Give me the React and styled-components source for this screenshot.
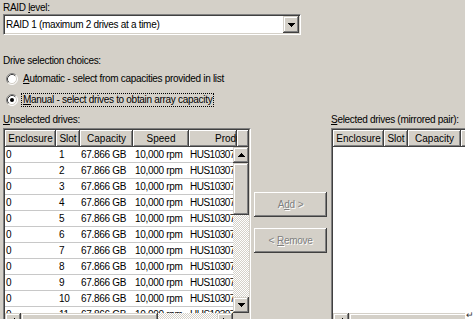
import styled, { createGlobalStyle, css } from 'styled-components';

const FACE = '#d4d0c8';
const SHADOW = '#808080';
const DARK = '#404040';

const COLS = [51, 24, 53, 56];

const drives = Array.from({ length: 12 }, (_, i) => ({
  enclosure: '0',
  slot: String(i + 1),
  capacity: '67.866 GB',
  speed: '10,000 rpm',
  product: 'HUS103073FL3800',
}));

const GlobalStyle = createGlobalStyle`
  body {
    margin: 0;
    background: #fff;
  }
`;

const raised = css`
  background: ${FACE};
  box-shadow: inset -1px -1px ${DARK}, inset 1px 1px ${FACE}, inset -2px -2px ${SHADOW}, inset 2px 2px #fff;
`;

const Page = styled.div`
  display: flex;
  align-items: flex-end;
  width: 474px;
  height: 319px;
  overflow: hidden;
  font-family: 'Liberation Sans', Arial, sans-serif;
  font-size: 10px;
  letter-spacing: -0.3px;
  color: #000;
`;

const Dialog = styled.div`
  width: 465px;
  height: 319px;
  flex-shrink: 0;
  overflow: hidden;
  box-sizing: border-box;
  padding: 1px 0 0 3px;
  background: ${FACE};
`;

const Label = styled.div`
  height: 13px;
  line-height: 13px;
  white-space: nowrap;
  margin-top: ${p => p.$top || 0}px;
`;

const Key = styled.span`
  text-decoration: underline;
`;

const Combo = styled.div`
  width: 298px;
  height: 21px;
  box-sizing: border-box;
  display: flex;
  align-items: center;
  justify-content: space-between;
  padding: 0 1px 0 2px;
  background: #fff;
  border-top: 1px solid ${SHADOW};
  border-left: 1px solid ${SHADOW};
  border-right: 1px solid #fff;
  border-bottom: 1px solid #fff;
  box-shadow: inset 1px 1px ${DARK}, inset -1px -1px ${FACE};
`;

const DropButton = styled.div`
  width: 16px;
  height: 17px;
  display: flex;
  align-items: center;
  justify-content: center;
  ${raised}
`;

const Radios = styled.div`
  display: flex;
  flex-direction: column;
  margin-top: 1px;
`;

const RadioRow = styled.div`
  height: 21px;
  display: flex;
  align-items: center;
  gap: 5px;
  padding-left: 3px;
  white-space: nowrap;
`;

const RadioText = styled.span`
  line-height: 12px;
  padding: 0 1px;
  border: 1px dotted ${p => (p.$focus ? '#000' : 'transparent')};
  margin-left: -2px;
`;

const Panes = styled.div`
  display: flex;
  margin-top: 3px;
`;

const Pane = styled.div`
  width: ${p => p.$w}px;
  flex-shrink: 0;
  display: flex;
  flex-direction: column;
  gap: 2px;
`;

const Middle = styled.div`
  width: 73px;
  flex-shrink: 0;
  margin: 0 4px 0 3px;
  padding-top: 79px;
  display: flex;
  flex-direction: column;
  gap: 11px;
`;

const PushButton = styled.div`
  height: 25px;
  display: flex;
  align-items: center;
  justify-content: center;
  gap: 3px;
  color: ${SHADOW};
  text-shadow: 1px 1px #fff;
  background: ${FACE};
  box-shadow: inset -1px -1px ${DARK}, inset 1px 1px #fff, inset -2px -2px ${SHADOW}, inset 2px 2px ${FACE};
`;

const ListBox = styled.div`
  height: 205px;
  box-sizing: border-box;
  border-top: 1px solid ${SHADOW};
  border-left: 1px solid ${SHADOW};
  border-right: 1px solid #fff;
  border-bottom: 1px solid #fff;
`;

const ListInner = styled.div`
  height: 100%;
  box-sizing: border-box;
  border-top: 1px solid ${DARK};
  border-left: 1px solid ${DARK};
  border-right: 1px solid ${FACE};
  border-bottom: 1px solid ${FACE};
  background: #fff;
  display: flex;
  flex-direction: column;
  overflow: hidden;
`;

const HeaderRow = styled.div`
  display: flex;
  height: 17px;
  flex-shrink: 0;
  background: ${FACE};
`;

const HeadCell = styled.div`
  width: ${p => p.$w}px;
  flex-shrink: 0;
  box-sizing: border-box;
  overflow: hidden;
  white-space: nowrap;
  line-height: 17px;
  letter-spacing: 0;
  text-align: ${p => (p.$pad ? 'left' : 'center')};
  padding-left: ${p => p.$pad || 0}px;
  background: ${FACE};
  box-shadow: inset -1px -1px ${DARK}, inset 1px 1px #fff, inset -2px -2px ${SHADOW};
`;

const Body = styled.div`
  display: flex;
  height: 166px;
  flex-shrink: 0;
`;

const Rows = styled.div`
  flex: 1;
  overflow: hidden;
`;

const Row = styled.div`
  display: flex;
  height: 16px;
  box-sizing: border-box;
  border-bottom: 1px solid #c8c8c8;
  line-height: 15px;
  white-space: nowrap;
`;

const Cell = styled.div`
  width: ${p => p.$w}px;
  flex-shrink: 0;
  overflow: hidden;
  box-sizing: border-box;
  padding-left: ${p => p.$pad}px;
  letter-spacing: ${p => (p.$tight ? '-0.5px' : 'inherit')};
`;

const VScroll = styled.div`
  width: 16px;
  display: flex;
  flex-direction: column;
`;

const HScroll = styled.div`
  display: flex;
  height: 16px;
  flex-shrink: 0;
`;

const ArrowButton = styled.div`
  width: 16px;
  height: 16px;
  flex-shrink: 0;
  display: flex;
  align-items: center;
  justify-content: center;
  ${raised}
`;

const Thumb = styled.div`
  ${p => (p.$vertical ? `height: ${p.$size}px;` : `width: ${p.$size}px;`)}
  flex-shrink: 0;
  ${raised}
`;

const Track = styled.div`
  flex: 1;
  background-color: #fff;
  background-image: repeating-conic-gradient(${FACE} 0 25%, #fff 0 50%);
  background-size: 2px 2px;
`;

const Corner = styled.div`
  width: 16px;
  flex-shrink: 0;
  background: ${FACE};
`;

const Pilcrow = styled.span`
  font-size: 9px;
  line-height: 8px;
  margin-left: 1px;
  color: #333;
`;

function Arrow({ dir }) {
  const d = {
    up: 'M3 0h1v1h1v1h1v1h1v1H0V3h1V2h1V1h1z',
    down: 'M0 0h7v1H6v1H5v1H4v1H3V3H2V2H1V1H0z',
    left: 'M3 0h1v7H3V6H2V5H1V4H0V3h1V2h1V1h1z',
    right: 'M0 0h1v1h1v1h1v1h1v1H3v1H2v1H1v1H0z',
  }[dir];
  const vertical = dir === 'up' || dir === 'down';
  return (
    <svg width={vertical ? 7 : 4} height={vertical ? 4 : 7} viewBox={vertical ? '0 0 7 4' : '0 0 4 7'}>
      <path d={d} fill="#000" />
    </svg>
  );
}

function Radio({ checked }) {
  return (
    <svg width="12" height="12" viewBox="0 0 12 12">
      <circle cx="6" cy="6" r="5" fill="#fff" />
      <path d="M2.11 9.89A5.5 5.5 0 0 1 9.89 2.11" stroke={SHADOW} fill="none" />
      <path d="M9.89 2.11A5.5 5.5 0 0 1 2.11 9.89" stroke="#fff" fill="none" />
      <path d="M2.82 9.18A4.5 4.5 0 0 1 9.18 2.82" stroke={DARK} fill="none" />
      <path d="M9.18 2.82A4.5 4.5 0 0 1 2.82 9.18" stroke={FACE} fill="none" />
      {checked && <circle cx="6" cy="6" r="2" fill="#000" />}
    </svg>
  );
}

function Header() {
  return (
    <HeaderRow>
      <HeadCell $w={COLS[0]}>Enclosure</HeadCell>
      <HeadCell $w={COLS[1]}>Slot</HeadCell>
      <HeadCell $w={COLS[2]}>Capacity</HeadCell>
      <HeadCell $w={COLS[3]}>Speed</HeadCell>
      <HeadCell $w={48} $pad={26}>Product</HeadCell>
      <HeadCell $w={12} />
    </HeaderRow>
  );
}

export default function App() {
  return (
    <Page>
      <GlobalStyle />
      <Dialog>
        <Label>RAID <Key>l</Key>evel:</Label>
        <Combo>
          <span>RAID 1 (maximum 2 drives at a time)</span>
          <DropButton><Arrow dir="down" /></DropButton>
        </Combo>

        <Label $top={19}>Drive selection choices:</Label>
        <Radios>
          <RadioRow>
            <Radio />
            <RadioText><Key>A</Key>utomatic - select from capacities provided in list</RadioText>
          </RadioRow>
          <RadioRow>
            <Radio checked />
            <RadioText $focus><Key>M</Key>anual - select drives to obtain array capacity</RadioText>
          </RadioRow>
        </Radios>

        <Panes>
          <Pane $w={248}>
            <Label><Key>U</Key>nselected drives:</Label>
            <ListBox>
              <ListInner>
                <Header />
                <Body>
                  <Rows>
                    {drives.map(d => (
                      <Row key={d.slot}>
                        <Cell $w={COLS[0]} $pad={1}>{d.enclosure}</Cell>
                        <Cell $w={COLS[1]} $pad={3}>{d.slot}</Cell>
                        <Cell $w={COLS[2]} $pad={1}>{d.capacity}</Cell>
                        <Cell $w={COLS[3]} $pad={2}>{d.speed}</Cell>
                        <Cell $w={60} $pad={1} $tight>{d.product}</Cell>
                      </Row>
                    ))}
                  </Rows>
                  <VScroll>
                    <ArrowButton><Arrow dir="up" /></ArrowButton>
                    <Thumb $vertical $size={52} />
                    <Track />
                    <ArrowButton><Arrow dir="down" /></ArrowButton>
                  </VScroll>
                </Body>
                <HScroll>
                  <ArrowButton><Arrow dir="left" /></ArrowButton>
                  <Thumb $size={137} />
                  <Track />
                  <ArrowButton><Arrow dir="right" /></ArrowButton>
                  <Corner />
                </HScroll>
              </ListInner>
            </ListBox>
          </Pane>

          <Middle>
            <PushButton><span>A<Key>d</Key>d</span><span>&gt;</span></PushButton>
            <PushButton><span>&lt;</span><span><Key>R</Key>emove</span></PushButton>
          </Middle>

          <Pane $w={200}>
            <Label><Key>S</Key>elected drives (mirrored pair):</Label>
            <ListBox>
              <ListInner>
                <Header />
                <Body />
                <HScroll>
                  <ArrowButton><Arrow dir="left" /></ArrowButton>
                  <Thumb $size={170} />
                </HScroll>
              </ListInner>
            </ListBox>
          </Pane>
        </Panes>
      </Dialog>
      <Pilcrow>↵</Pilcrow>
    </Page>
  );
}
